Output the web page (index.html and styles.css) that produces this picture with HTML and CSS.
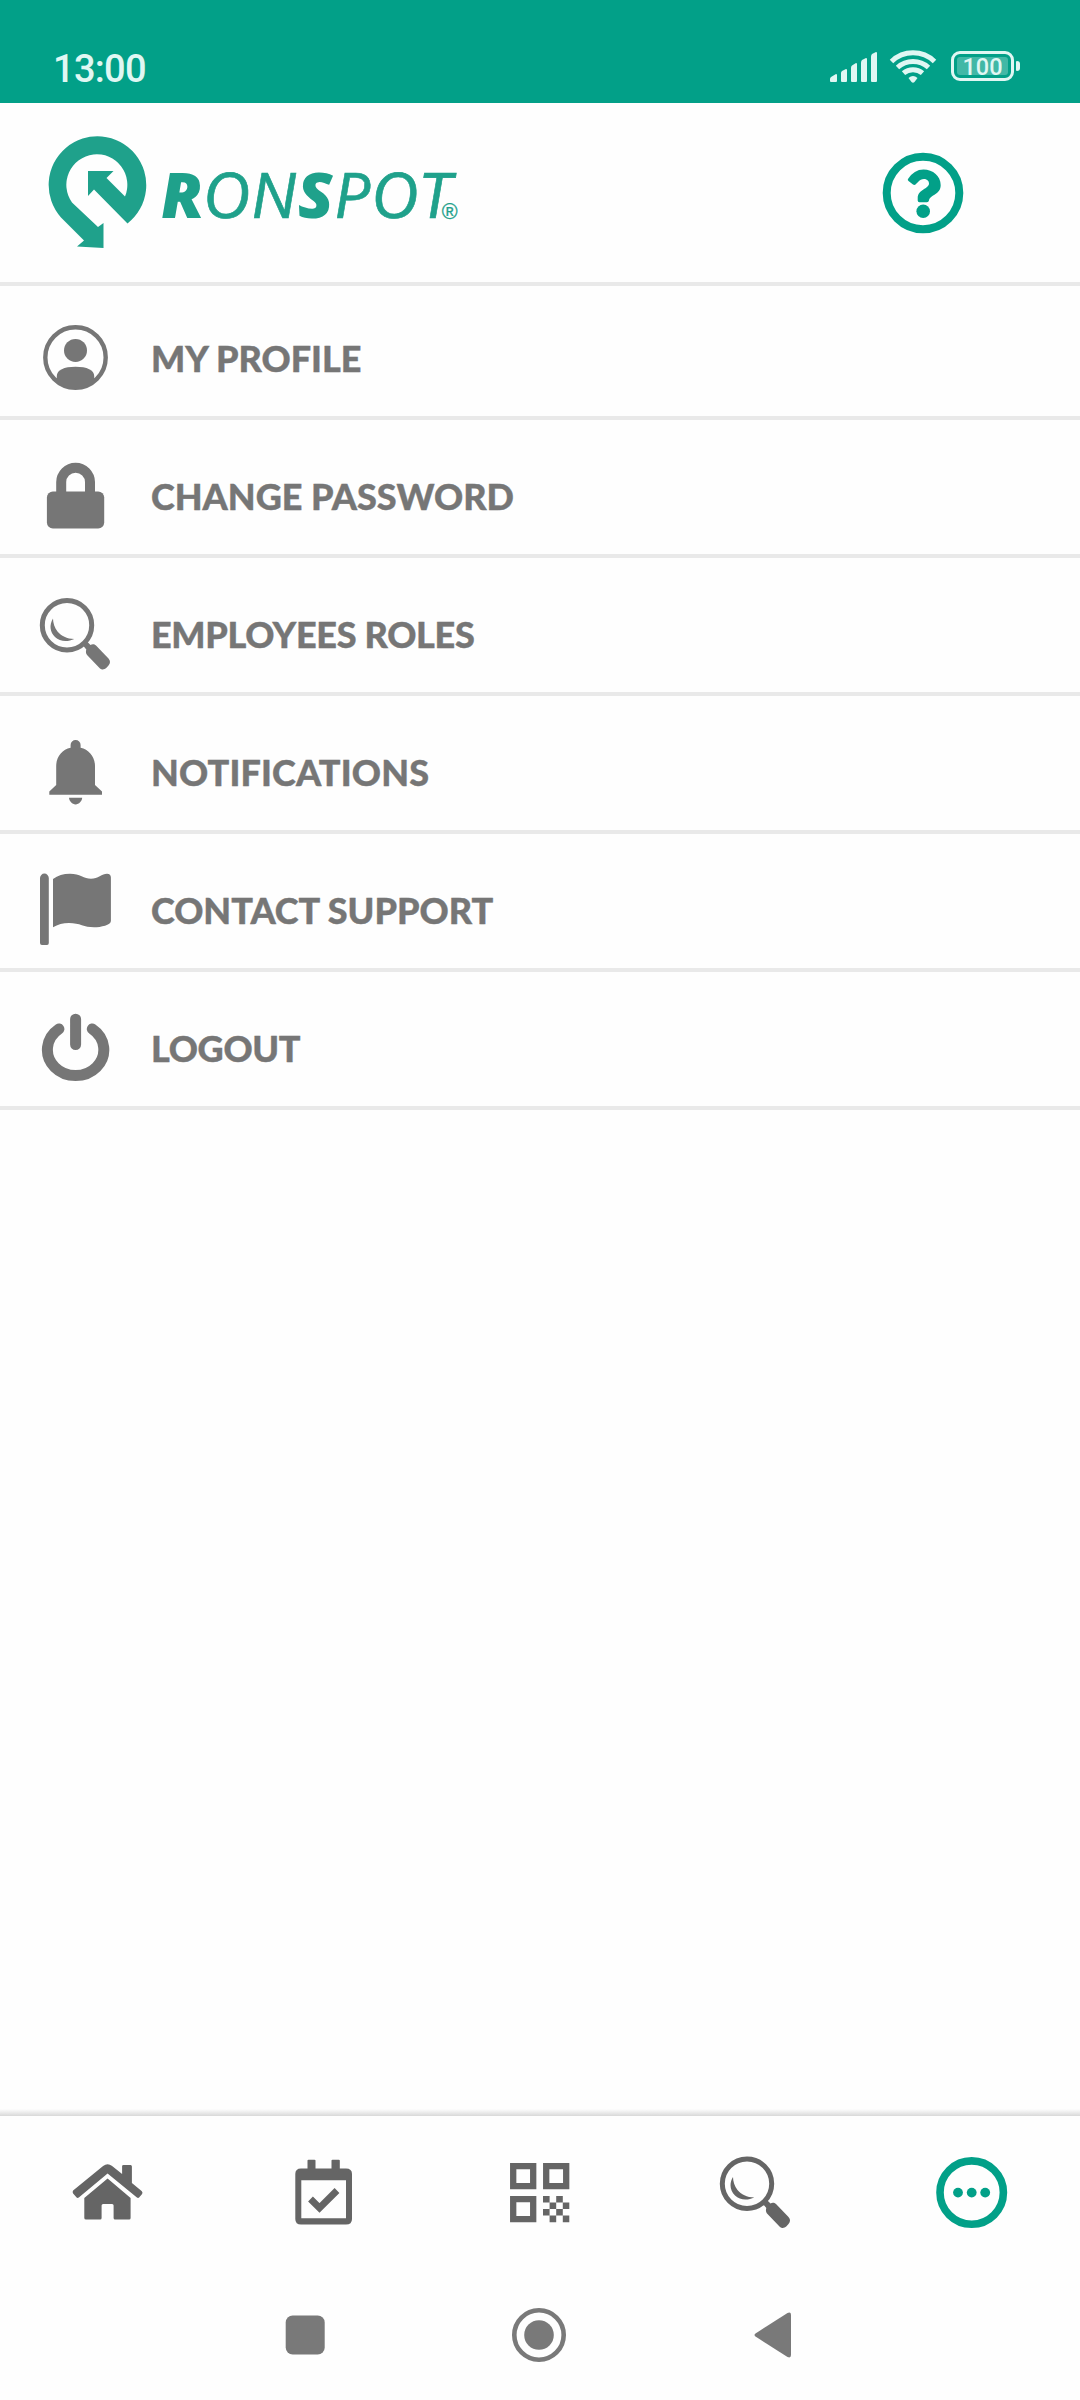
FILE: index.html
```html
<!DOCTYPE html>
<html lang="en">
<head>
<meta charset="utf-8">
<title>Ronspot</title>
<link rel="stylesheet" href="styles.css">
</head>
<body>
<div class="screen">
  <div class="status">
    <span class="clock">13:00</span>
    <svg class="signal" width="50" height="32" viewBox="0 0 50 32"><path d="M1 28Q1 27 2 26L7 23Q8 23 8 24V30Q8 31 7 31H2Q1 31 1 30ZM12 22Q12 21 13 20L17 18Q18 18 18 19V30Q18 31 17 31H13Q12 31 12 30ZM22 17Q22 15 23 14.500L27 12Q28 12 28 13V30Q28 31 27 31H23Q22 31 22 30ZM32 12Q32 10 33 9L37 7Q38 7 38 8V30Q38 31 37 31H33Q32 31 32 30ZM42 6Q42 4 43 3L47 1Q48 1 48 2V30Q48 31 47 31H43Q42 31 42 30Z"/></svg>
    <svg class="wifi" width="48" height="36" viewBox="0 0 48 36"><g fill="none" stroke="currentColor" stroke-width="5"><path d="M2.500 13.500A31 31 0 0 1 45.500 13.500"/><path d="M8.500 19.500A23 23 0 0 1 39.500 19.500"/><path d="M14.500 25.200A14.500 14.500 0 0 1 33.500 25.200"/></g><path d="M19.500 30Q24 26 28.500 30L25.500 34Q24 35.500 22.500 34Z"/></svg>
    <div class="battery"><span class="level">100</span></div>
    <i class="cap"></i>
  </div>

  <header class="header">
    <svg class="mark" width="100" height="114" viewBox="2 0 100 114"><path d="M81.500 88.500L48 54.500L42 61V36H67.500L60.500 43L79 61.500A30.500 30.500 0 1 0 26 67.500L52 92L57.500 88V113L31 111.500L38 105.500L15 82.500A48.800 48.800 0 1 1 81.500 88.500Z"/></svg>
    <svg class="wordmark" width="312" height="80" viewBox="0 0 312 80"><text font-size="63" transform="translate(0 58) skewX(3) scale(1.052 1)"><tspan x="10.800" class="heavy">R</tspan><tspan x="51.200" class="thin">ON</tspan><tspan x="141" class="heavy">S</tspan><tspan x="175.400" class="thin">POT</tspan></text><text class="reg" x="291.800" y="58.500" font-size="21.500">®</text></svg>
    <svg class="help" width="82" height="82" viewBox="0 0 82 82"><circle cx="41" cy="41" r="36.300" fill="none" stroke="currentColor" stroke-width="8"/><path d="M26 27Q32 17.500 41.500 17.500C51 17.500 58.700 24 58.700 33C58.700 43 48 42.500 47 48.500Q46.500 50.300 45 50.300H37.500Q35.700 50.300 35.700 48.500V46C36 37 47 37 47 31.500C47 28.500 44.500 27 42 27C37 27 35.500 31.500 33 32.800Q32 33.200 31 32.500L26.500 29Q25.300 28 26 27Z"/><circle cx="41.200" cy="59.200" r="6.800"/></svg>
  </header>

  <nav class="menu">
    <a class="item"><svg class="icon" viewBox="0 0 80 80"><circle cx="39.500" cy="39.500" r="30.200" fill="none" stroke="currentColor" stroke-width="4.400"/><circle cx="39.500" cy="32.400" r="11.500"/><path d="M20.800 63V58C20.800 52 28 48.700 39.500 48.700S58.200 52 58.200 58V63Q50 71 39.500 71T20.800 63Z"/></svg><span>MY PROFILE</span></a>
    <a class="item"><svg class="icon" viewBox="0 0 80 80"><rect x="10.900" y="35.500" width="57.300" height="37" rx="6"/><path d="M25.200 38V26.100a14.400 14.400 0 0 1 28.800 0V38" fill="none" stroke="currentColor" stroke-width="10"/></svg><span>CHANGE PASSWORD</span></a>
    <a class="item"><svg class="icon" viewBox="0 0 80 80"><use href="#lens"/></svg><span class="tight">EMPLOYEES ROLES</span></a>
    <a class="item"><svg class="icon" viewBox="0 0 80 80"><path d="M34.600 15.700V13a5 5 0 0 1 10 0V15.700C53 17.500 59 25 59 34V53L66 59.500V62.700H13.300V59.500L20.200 53V34C20.200 25 26 17.500 34.600 15.700ZM33 65.700H46.200C46 69 43 72.400 39.600 72.400S33.200 69 33 65.700Z"/></svg><span class="loose">NOTIFICATIONS</span></a>
    <a class="item"><svg class="icon" viewBox="0 0 80 80"><path d="M4 8a4.400 4.400 0 0 1 8.800 0V73Q12.800 75 11 75H6Q4 75 4 73ZM17 9Q24 3.700 34 3.700C44 3.700 48 8.700 55 8.700C62 8.700 66 3.700 71 3.700Q74.900 4 74.900 7.500V51C74.900 55 65 57.300 58 57.300C48 57.300 44 53 33 53Q24 53 17 57.300Z"/></svg><span>CONTACT SUPPORT</span></a>
    <a class="item"><svg class="icon" viewBox="0 0 80 80"><path d="M39.600 11.200V36.500M22.900 21A28.200 25.800 0 1 0 56.300 21" fill="none" stroke="currentColor" stroke-width="11" stroke-linecap="round"/></svg><span class="tight">LOGOUT</span></a>
  </nav>

  <nav class="tabs">
    <a class="tab"><svg class="icon" viewBox="0.400 0 80 80"><path d="M5.500 39.500L35.500 15Q40 11.500 44.500 15L54.500 23V15Q54.500 14 56 14H63Q64.300 14 64.300 15.500V32L74 40Q75.500 41.500 74.500 43L71.500 46.500Q70.500 47.500 69 46.300L40 22.500L11.500 46.300Q10 47.500 9 46.500L5.500 42.500Q4.500 41 5.500 39.500ZM40 27.500L63 47V67Q63 68.500 61.500 68.500H47.500Q46 68.500 46 67V54.500Q46 53 44.500 53H35.500Q34 53 34 54.500V67Q34 68.500 32.500 68.500H18.500Q16.700 68.500 16.700 67V47Z"/></svg></a>
    <a class="tab"><svg class="icon" viewBox="-4 0 80 80"><path fill-rule="evenodd" d="M19.500 17.500V9.500Q19.500 8.800 20.500 8.800H26.500Q27.500 8.800 27.500 9.500V17.500H43.500V9.500Q43.500 8.800 44.500 8.800H50.800Q51.800 8.800 51.800 9.500V17.500H58Q64 17.500 64 23V68Q64 73.500 58 73.500H13Q7.300 73.500 7.300 68V23Q7.300 17.500 13 17.500ZM13.300 29.300V67.200H58V29.300Z"/><path d="M22.500 48L31.500 57L49 39.500" fill="none" stroke="currentColor" stroke-width="6.800"/></svg></a>
    <a class="tab"><svg class="icon" viewBox="0 0 80 80"><g fill="none" stroke="currentColor" stroke-width="6.300"><path d="M13.200 15.200h20v20h-20zM46.200 15.200h20v20h-20zM13.200 48.200h20v20h-20z"/></g><path d="M43 45h6.600v6.500H43zM56.200 45h6.600v6.500h-6.600zM49.600 51.500h6.600V58h-6.600zM62.800 51.500h6.500V58h-6.500zM43 58h6.600v6.600H43zM56.200 58h6.600v6.600h-6.600zM49.600 64.600h6.600v6.600h-6.600zM62.800 64.600h6.500v6.600h-6.500z"/></svg></a>
    <a class="tab"><svg class="icon" viewBox="0 -1.500 80 80"><g id="lens"><circle cx="31" cy="31.200" r="24.700" fill="none" stroke="currentColor" stroke-width="5"/><path d="M17 24.500C13 31 14 38 19 43C24 48 32 48 38.300 45C31 44.800 25 42 21.500 37.500C18.500 33.500 17 29 17 24.500ZM47 51.500L51 47.500L54.500 51C56 49.800 58.500 50 60 51.500L72.500 64.500C74.500 67 74.500 69 72.500 71.500L70.500 73.800C68 76 65.500 76 63.500 74L51.500 61.500C50 60 49.500 58 50.300 55.500Z"/></g></svg></a>
    <a class="tab active"><svg class="icon" viewBox="0.300 -0.600 80 80"><circle cx="40" cy="41" r="31.700" fill="none" stroke="currentColor" stroke-width="7.600"/><circle cx="26.300" cy="41" r="4.900"/><circle cx="40" cy="41" r="4.900"/><circle cx="53.500" cy="41" r="4.900"/></svg></a>
  </nav>

  <div class="sysnav">
    <svg width="60" height="60" viewBox="0 0 60 60"><rect x="10.700" y="10.500" width="39" height="39" rx="7"/></svg>
    <svg width="60" height="60" viewBox="0 0 60 60"><circle cx="30" cy="30" r="24.700" fill="none" stroke="currentColor" stroke-width="4.600"/><circle cx="30" cy="30" r="14.800"/></svg>
    <svg width="60" height="60" viewBox="0 0 60 60"><path d="M12.500 28.500L44.500 8Q48 6.500 48 10V50Q48 53.500 44.500 52L12.500 31.500Q10.500 30 12.500 28.500Z"/></svg>
  </div>
</div>
</body>
</html>
```
FILE: styles.css
```css
* { box-sizing: border-box; }
body { margin: 0; background: #fefefe; }
svg { display: block; fill: currentColor; }

.screen {
  width: 1080px;
  height: 2400px;
  display: flex;
  flex-direction: column;
  background: #fefefe;
  font-family: Lato, "Open Sans", sans-serif;
}

.status {
  height: 103px;
  padding: 29px 60px 0 53px;
  display: flex;
  align-items: center;
  background: #02a088;
  color: #e0f7f3;
  font-family: Roboto, sans-serif;
}
.clock { flex: 1; padding-top: 5px; font-size: 38px; font-weight: 500; letter-spacing: -0.7px; }
.signal { margin-top: 2px; }
.wifi { margin: -1px 14.5px 0 10px; }
.battery {
  width: 63px;
  height: 30px;
  padding: 3px;
  border: 3px solid #e0f7f3;
  border-radius: 9px;
}
.level {
  display: block;
  height: 18px;
  border-radius: 3px;
  background: #41b8a6;
  font-size: 23.5px;
  line-height: 20px;
  font-weight: 500;
  text-align: center;
}
.cap { width: 4px; height: 10px; margin-left: 2px; border-radius: 1px 3px 3px 1px; background: #e0f7f3; }

.header {
  height: 183px;
  padding: 32px 116px 0 48px;
  display: flex;
  align-items: flex-start;
  border-bottom: 4px solid #e9e9e9;
  color: #1fa18b;
}
.wordmark { margin: 25px 0 0 2px; overflow: visible; font-family: "Open Sans", sans-serif; font-style: italic; }
.heavy { font-weight: 800; }
.thin { font-weight: 400; stroke: currentColor; stroke-width: 0.6px; }
.reg { font-family: "Liberation Sans", sans-serif; font-style: normal; stroke: currentColor; stroke-width: 0.3px; }
.help { margin: 16.5px 0 0 auto; color: #02a088; }

.menu { flex: 1; color: #767676; }
.item {
  height: 138px;
  padding: 0 36px;
  display: flex;
  align-items: center;
  gap: 35px;
  border-bottom: 4px solid #e9e9e9;
  font-size: 36px;
  font-weight: 900;
}
.item .icon { margin-top: 18px; }
.item span { padding-top: 18px; line-height: 44px; -webkit-text-stroke: 0.4px currentColor; }
.item .tight { letter-spacing: -0.3px; }
.item .loose { letter-spacing: 0.15px; }
.item:first-child { height: 134px; }
.item:first-child .icon { margin-top: 14px; }
.item:first-child span { padding-top: 14px; }
.icon { width: 80px; height: 80px; flex: none; }

.tabs {
  height: 177px;
  padding-top: 42px;
  display: flex;
  background: linear-gradient(#fefefe, #d8d8d8 7px, #fefefe 7px);
  color: #656565;
}
.tab { flex: 1; display: flex; justify-content: center; }
.active { color: #02a088; }

.sysnav {
  height: 114px;
  padding: 19px 277px 0 275px;
  display: flex;
  justify-content: space-between;
  align-items: flex-start;
  color: #797979;
}
```
